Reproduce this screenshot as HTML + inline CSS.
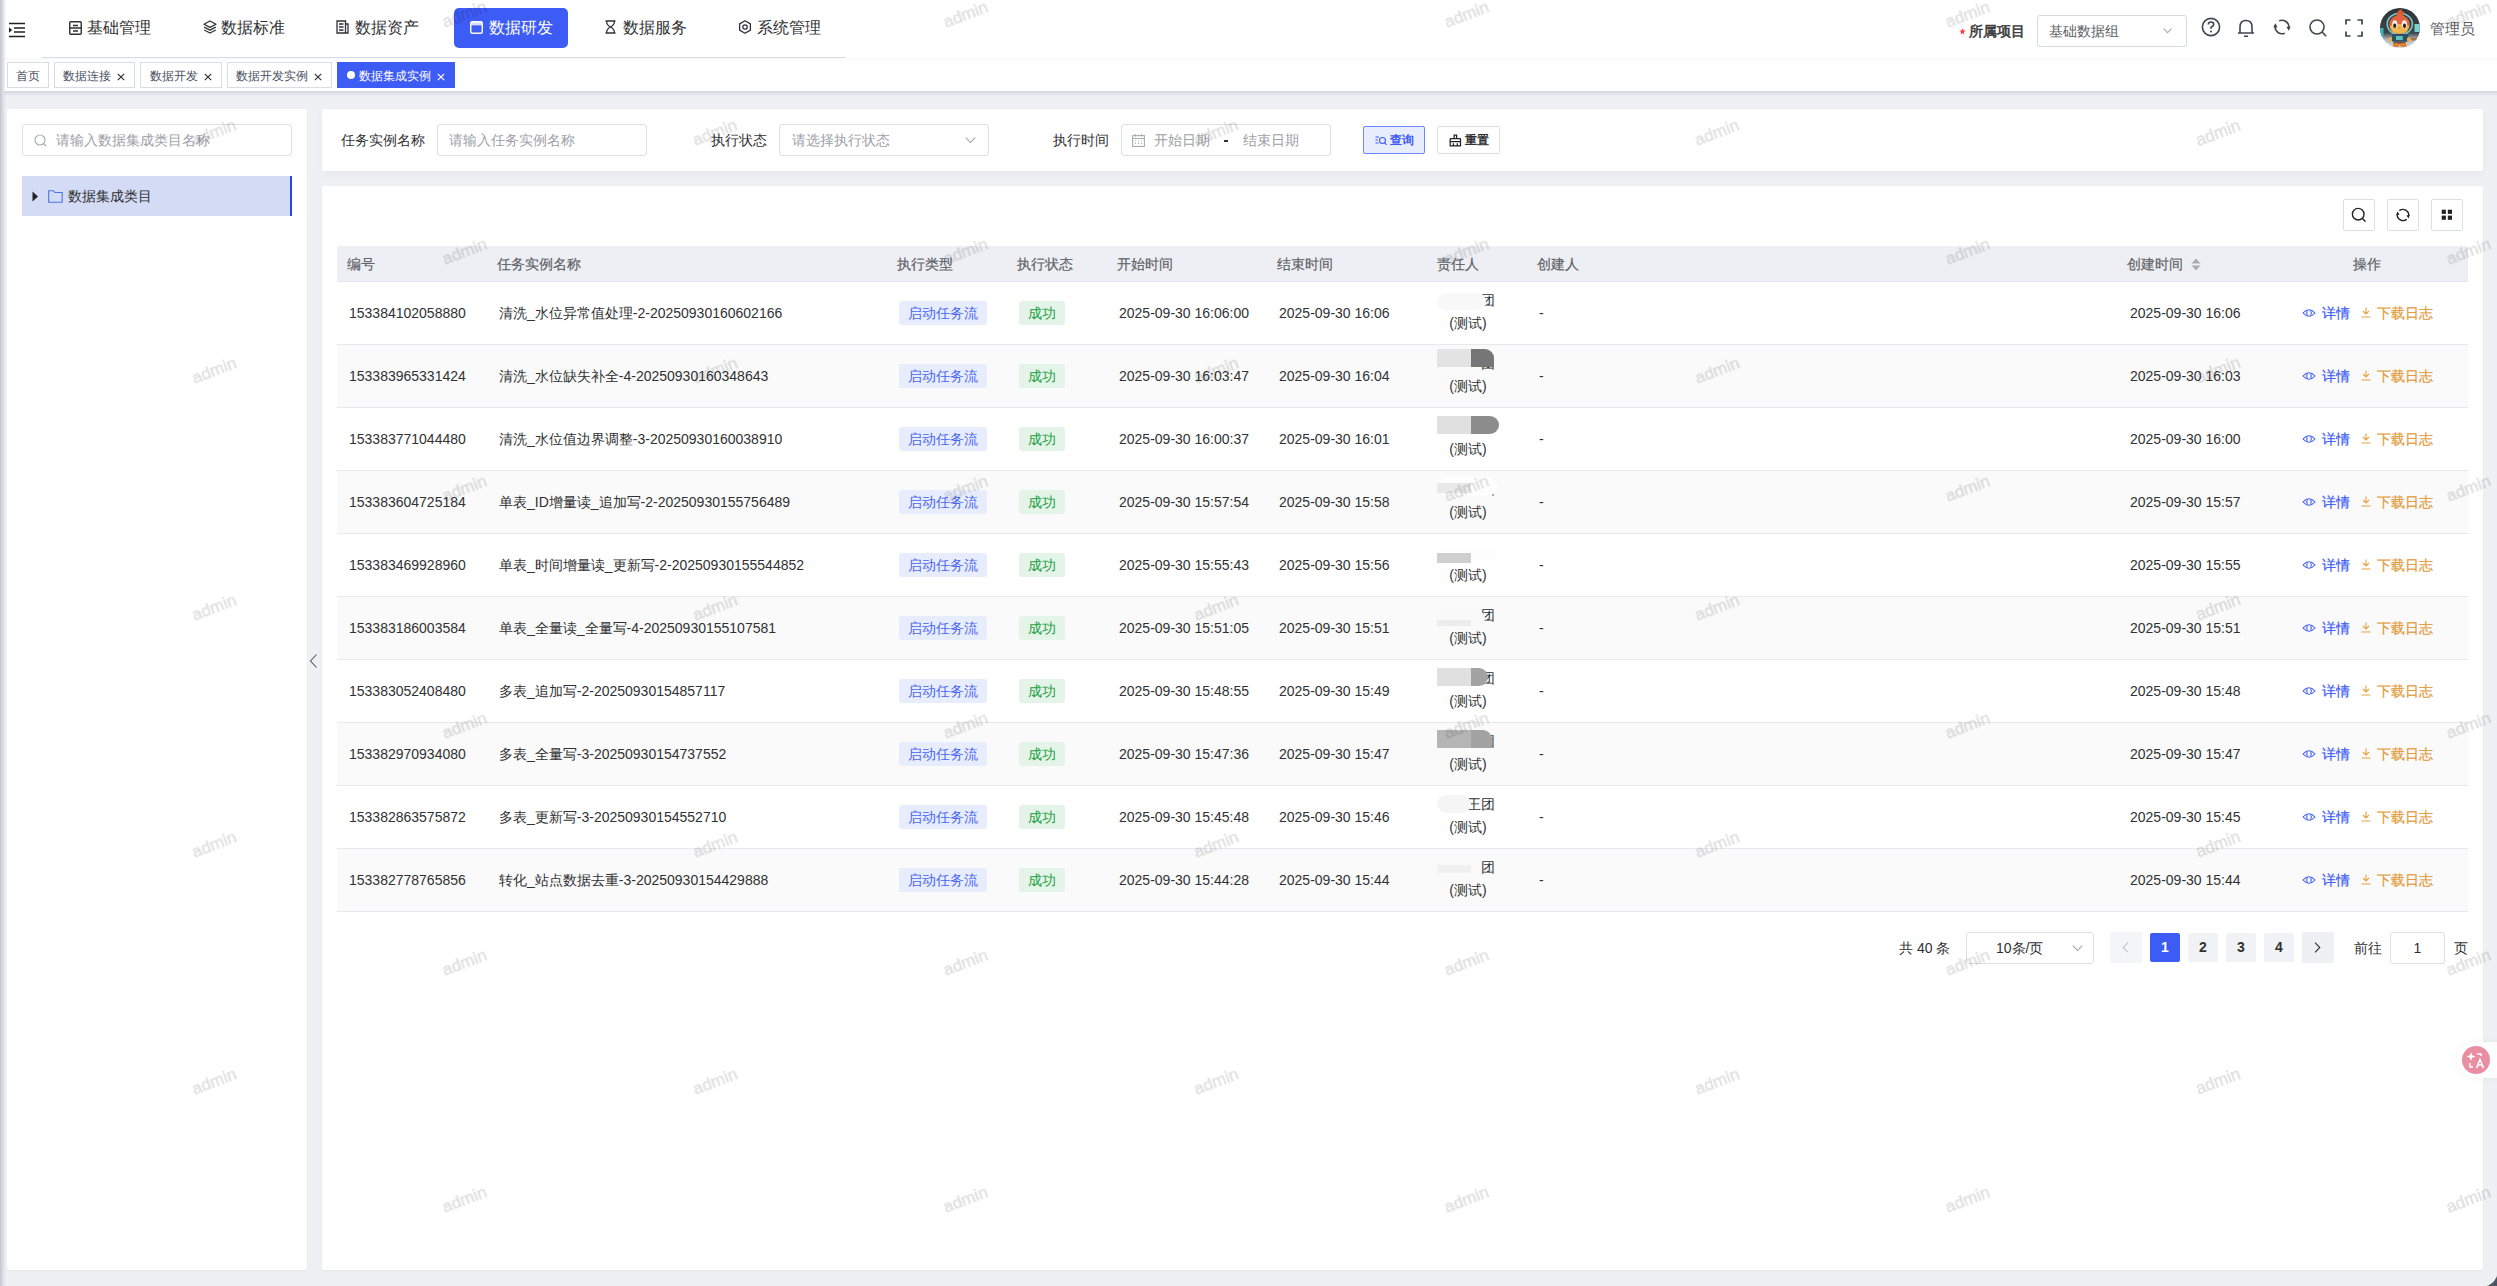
<!DOCTYPE html>
<html><head><meta charset="utf-8">
<style>
*{box-sizing:border-box;margin:0;padding:0}
html,body{width:2497px;height:1286px;overflow:hidden}
body{position:relative;background:#eef0f4;font-family:"Liberation Sans",sans-serif;color:#303133;font-size:14px}
.abs{position:absolute}
#hdr{position:absolute;left:0;top:0;width:2497px;height:58px;background:#fff}
#navline{position:absolute;left:42px;top:57px;width:804px;height:1px;background:#d8dbe4}
.nav{position:absolute;top:8px;height:40px;line-height:40px;font-size:16px;color:#303133;white-space:nowrap}
.nav svg{position:absolute;top:12px}
.nav span{position:absolute;top:0}
#navact{position:absolute;left:454px;top:8px;width:114px;height:40px;background:#3d5bf5;border-radius:5px}
#tabbar{position:absolute;left:0;top:58px;width:2497px;height:33px;background:#fff;box-shadow:inset 0 3px 3px -2px rgba(0,0,0,.04)}
#tabshadow{position:absolute;left:0;top:91px;width:2497px;height:5px;background:linear-gradient(#d3d6de,#eef0f4)}
.tab{position:absolute;top:62px;height:26px;border:1px solid #d8dce5;background:#fff;font-size:12px;line-height:26px;color:#495060;white-space:nowrap}
.tab i{position:absolute;top:10px;width:8px;height:8px;display:block}.tab i svg{display:block}
.panel{position:absolute;background:#fff;border-radius:2px}
.inp{position:absolute;height:32px;border:1px solid #dcdfe6;border-radius:3px;background:#fff;font-size:14px;line-height:30px;color:#9ea1a8;white-space:nowrap}
.lbl{position:absolute;font-size:14px;line-height:32px;color:#303133;white-space:nowrap}
.btn{position:absolute;height:28px;border:1px solid #dcdfe6;border-radius:2px;font-size:12px;line-height:26px;font-weight:bold;white-space:nowrap}
#thead{position:absolute;left:337px;top:246px;width:2131px;height:36px;background:#eeeff4;border-bottom:1px solid #e4e7ef}
.th{position:absolute;top:246px;line-height:36px;font-size:14px;font-weight:400;color:#606368;-webkit-text-stroke:.2px #606368;white-space:nowrap}
.tr{position:absolute;left:337px;width:2131px;height:63px;border-bottom:1px solid #e6e9f1}
.tr .td{position:absolute;top:0;line-height:62px;font-size:14px;color:#303133;white-space:nowrap;margin-left:-337px}
.tr .tag{position:absolute;top:19px;height:24px;line-height:24px;padding:0 9px;font-size:14px;border-radius:3px;margin-left:-337px;white-space:nowrap}
.tb{background:#e8edfd;color:#4866f4}
.tg{background:#e5f4e9;color:#23a043}
.resp{position:absolute;left:1100px;top:7px;width:62px;text-align:center;font-size:14px;line-height:23px;color:#303133}
.resp .r1{height:23px;text-align:right;width:58px}
.blob{position:absolute;margin-left:-337px}
.act{position:absolute;top:0;line-height:62px;margin-left:-337px;white-space:nowrap}
.act svg{position:relative;top:0px;margin-right:5px}
.act b{font-weight:normal;font-size:14px;-webkit-text-stroke:.2px currentColor;margin-left:1px}
.blue{color:#3d5bf5}
.orange{color:#e39b3b}
.tbtn{position:absolute;top:199px;width:32px;height:32px;border:1px solid #dcdfe6;border-radius:2px;background:#fff}
.tbtn svg{position:absolute;left:-1px;top:-1px}
.pg{position:absolute;top:933px;width:30px;height:29px;background:#f0f2f5;border-radius:2px;text-align:center;line-height:29px;font-size:14px;font-weight:bold;color:#303133}
#wm{position:absolute;left:0;top:0;width:2497px;height:1286px;pointer-events:none}
#wm text{font-family:"Liberation Sans",sans-serif;font-size:17px;fill:#000;stroke:#000;stroke-width:.6px;text-anchor:middle;dominant-baseline:central}
</style></head><body>
<div id="hdr"></div>
<div id="navline"></div>
<!-- hamburger -->
<svg class="abs" style="left:8px;top:21px" width="18" height="17" viewBox="0 0 18 17"><path d="M1 2.5H17M6 7H17M6 11H17M1 15.5H17" stroke="#222" stroke-width="1.6" fill="none"/><path d="M1 6.3L4.2 9L1 11.7Z" fill="#222"/></svg>
<!-- nav items -->
<div class="nav" style="left:68px"><svg width="13" height="14" viewBox="0 0 13 14" style="left:1px;top:13px"><rect x="0.75" y="0.75" width="11.5" height="12.5" rx="1" fill="none" stroke="#303133" stroke-width="1.4"/><path d="M4 4.5H9M0.8 7H12.2M4 10H9" stroke="#303133" stroke-width="1.4"/></svg><span style="left:19px">基础管理</span></div>
<div class="nav" style="left:202px"><svg width="14" height="14" viewBox="0 0 14 14" style="left:1px;top:12px"><path d="M7 1L13 4.2L7 7.4L1 4.2Z" fill="none" stroke="#303133" stroke-width="1.3" stroke-linejoin="round"/><path d="M1.2 7.2L7 10.2L12.8 7.2M1.2 10L7 13L12.8 10" fill="none" stroke="#303133" stroke-width="1.3" stroke-linejoin="round"/></svg><span style="left:19px">数据标准</span></div>
<div class="nav" style="left:336px"><svg width="13" height="14" viewBox="0 0 13 14" style="left:0px;top:12px"><path d="M1 1H9.5V13H1Z M9.5 4H12V13H9.5" fill="none" stroke="#303133" stroke-width="1.3"/><path d="M3 4H7.5M3 7H7.5M3 10H7.5" stroke="#303133" stroke-width="1.3"/></svg><span style="left:19px">数据资产</span></div>
<div id="navact"></div>
<div class="nav" style="left:470px;color:#fff"><svg width="13" height="13" viewBox="0 0 13 13" style="left:0px;top:13px"><rect x="0.75" y="0.75" width="11.5" height="11.5" rx="1.5" fill="none" stroke="#fff" stroke-width="1.4"/><rect x="0.75" y="0.75" width="11.5" height="3.6" fill="#fff" opacity=".8"/></svg><span style="left:19px">数据研发</span></div>
<div class="nav" style="left:604px"><svg width="13" height="14" viewBox="0 0 13 14" style="left:0px;top:12px"><path d="M1.5 1H11.5M1.5 13H11.5M2.5 1Q2.5 5 6.5 7Q10.5 9 10.5 13M10.5 1Q10.5 5 6.5 7Q2.5 9 2.5 13" fill="none" stroke="#303133" stroke-width="1.3"/></svg><span style="left:19px">数据服务</span></div>
<div class="nav" style="left:738px"><svg width="14" height="14" viewBox="0 0 14 14" style="left:0px;top:12px"><path d="M7 0.8L12.4 3.9V10.1L7 13.2L1.6 10.1V3.9Z" fill="none" stroke="#303133" stroke-width="1.3" stroke-linejoin="round"/><circle cx="7" cy="7" r="2.2" fill="none" stroke="#303133" stroke-width="1.3"/></svg><span style="left:19px">系统管理</span></div>
<!-- right header -->
<svg class="abs" style="left:1959px;top:28px" width="7" height="7" viewBox="0 0 7 7"><path d="M3.5 0.3L4.3 2.6L6.7 2.6L4.8 4.1L5.5 6.6L3.5 5.1L1.5 6.6L2.2 4.1L0.3 2.6L2.7 2.6Z" fill="#f33"/></svg><div class="abs" style="left:1969px;top:16px;line-height:30px;font-size:14px;color:#3a3a3a;-webkit-text-stroke:.55px #3a3a3a;white-space:nowrap">所属项目</div>
<div class="inp" style="left:2037px;top:15px;width:150px;height:32px;color:#606266;padding-left:11px;border-color:#d5d9e2">基础数据组<svg style="position:absolute;left:125px;top:12px" width="9" height="6" viewBox="0 0 9 6"><path d="M0.6 0.7L4.5 4.6L8.4 0.7" fill="none" stroke="#a8abb2" stroke-width="1.1"/></svg></div>
<svg class="abs" style="left:2201px;top:17px" width="20" height="20" viewBox="0 0 20 20"><circle cx="10" cy="10" r="8.6" fill="none" stroke="#3f4450" stroke-width="1.6"/><path d="M7.3 7.6Q7.3 5 10 5Q12.7 5 12.7 7.4Q12.7 9 10 10.2V11.8" fill="none" stroke="#3f4450" stroke-width="1.6"/><circle cx="10" cy="14.4" r="1" fill="#3f4450"/></svg>
<svg class="abs" style="left:2236px;top:18px" width="20" height="20" viewBox="0 0 20 20"><path d="M4 15V9Q4 2.5 10 2.5Q16 2.5 16 9V15M2 15H18M8 18.2H12" fill="none" stroke="#3f4450" stroke-width="1.6"/></svg>
<svg class="abs" style="left:2272px;top:17px" width="20" height="20" viewBox="0 0 20 20"><path d="M7.2 3.8A7 7 0 0 1 16.9 10.6M12.8 16.2A7 7 0 0 1 3.1 9.4" fill="none" stroke="#3f4450" stroke-width="1.6"/><path d="M1.3 10.3L3.3 6.2L5.6 10.2Z M18.7 9.7L16.7 13.8L14.4 9.8Z" fill="#3f4450"/></svg>
<svg class="abs" style="left:2308px;top:18px" width="20" height="20" viewBox="0 0 20 20"><circle cx="9" cy="9" r="7" fill="none" stroke="#3f4450" stroke-width="1.6"/><path d="M14 14L18.2 18.2" stroke="#3f4450" stroke-width="1.6"/></svg>
<svg class="abs" style="left:2344px;top:18px" width="20" height="20" viewBox="0 0 20 20"><path d="M2 6.5V2H6.5M13.5 2H18V6.5M18 13.5V18H13.5M6.5 18H2V13.5" fill="none" stroke="#3f4450" stroke-width="1.7"/></svg>
<!-- avatar -->
<svg class="abs" style="left:2380px;top:8px" width="40" height="40" viewBox="0 0 40 40"><defs><clipPath id="cp"><circle cx="20" cy="20" r="20"/></clipPath><linearGradient id="bgg" x1="0" y1="0" x2="0" y2="1"><stop offset="0" stop-color="#2b3338"/><stop offset=".62" stop-color="#3a464c"/><stop offset=".8" stop-color="#b9bec6"/><stop offset="1" stop-color="#d8dce2"/></linearGradient></defs><g clip-path="url(#cp)"><rect width="40" height="40" fill="url(#bgg)"/>
<rect x="34.5" y="16" width="6" height="8" fill="#7fd0d0"/><rect x="0" y="20" width="3.5" height="9" fill="#3fb5b5"/><rect x="31" y="30" width="6" height="2.5" fill="#a8714d"/>
<ellipse cx="19.8" cy="16" rx="12.6" ry="10.8" fill="none" stroke="#7cc7c0" stroke-width="1.6"/>
<path d="M16.5 8.5Q17 2 21 1.3Q21.8 4 24.3 4.5Q23 7 23.6 9Z" fill="#dd5a36"/>
<ellipse cx="19.5" cy="16.5" rx="10.3" ry="9.4" fill="#e0643f"/>
<path d="M10 18Q12 16.5 19.5 16Q27 16.5 29.2 18Q28.5 25.5 19.5 25.8Q10.5 25.5 10 18Z" fill="#efb84f"/>
<ellipse cx="14.8" cy="16.3" rx="2.6" ry="4" fill="#f3ece6"/><ellipse cx="24.4" cy="16.3" rx="2.6" ry="4" fill="#f3ece6"/>
<ellipse cx="14.7" cy="17.8" rx="1.5" ry="2.3" fill="#2a1a14"/><ellipse cx="24.5" cy="17.8" rx="1.5" ry="2.3" fill="#2a1a14"/>
<path d="M18.6 19.5L20.4 19.5L19.5 21Z" fill="#e86a2f"/>
<rect x="12" y="26" width="16.4" height="7.8" rx="1.5" fill="#2f4e68"/><rect x="16" y="28" width="6.8" height="4" fill="#5cc2c0"/>
<ellipse cx="10.3" cy="31.5" rx="1.8" ry="2.6" fill="#e6b13f"/><ellipse cx="28.6" cy="31.5" rx="1.8" ry="2.6" fill="#e6b13f"/>
<rect x="13.5" y="33.8" width="12" height="2" fill="#6b4a3a"/><ellipse cx="16.2" cy="37" rx="3.5" ry="2" fill="#e0812f"/><ellipse cx="23.3" cy="37" rx="3.5" ry="2" fill="#e0812f"/>
</g></svg>
<div class="abs" style="left:2430px;top:15px;line-height:28px;font-size:15px;color:#5a5e66">管理员</div>

<!-- tab bar -->
<div id="tabbar"></div>
<div id="tabshadow"></div>
<div class="tab" style="left:7px;width:42px;text-align:center">首页</div>
<div class="tab" style="left:54px;width:81px;padding-left:8px">数据连接<i style="left:62px"><svg width="8" height="8" viewBox="0 0 8 8"><path d="M0.8 0.8L7.2 7.2M7.2 0.8L0.8 7.2" stroke="#333" stroke-width="1.2"/></svg></i></div>
<div class="tab" style="left:140px;width:82px;padding-left:9px">数据开发<i style="left:63px"><svg width="8" height="8" viewBox="0 0 8 8"><path d="M0.8 0.8L7.2 7.2M7.2 0.8L0.8 7.2" stroke="#333" stroke-width="1.2"/></svg></i></div>
<div class="tab" style="left:227px;width:105px;padding-left:8px">数据开发实例<i style="left:86px"><svg width="8" height="8" viewBox="0 0 8 8"><path d="M0.8 0.8L7.2 7.2M7.2 0.8L0.8 7.2" stroke="#333" stroke-width="1.2"/></svg></i></div>
<div class="tab" style="left:337px;width:118px;padding-left:21px;background:#3d5bf5;border-color:#3d5bf5;color:#fff"><span style="position:absolute;left:9px;top:8px;width:8px;height:8px;border-radius:50%;background:#fff"></span>数据集成实例<i style="left:99px"><svg width="8" height="8" viewBox="0 0 8 8"><path d="M0.8 0.8L7.2 7.2M7.2 0.8L0.8 7.2" stroke="#fff" stroke-width="1.2"/></svg></i></div>

<!-- left panel -->
<div class="panel" style="left:7px;top:109px;width:300px;height:1161px;box-shadow:0 1px 2px rgba(0,0,0,.05)"></div>
<div class="inp" style="left:22px;top:124px;width:270px;padding-left:33px">请输入数据集成类目名称<svg style="position:absolute;left:11px;top:9px" width="13" height="13" viewBox="0 0 13 13"><circle cx="6" cy="6" r="5" fill="none" stroke="#a8abb2" stroke-width="1.2"/><path d="M9.6 9.6L12 12" stroke="#a8abb2" stroke-width="1.2"/></svg></div>
<div class="abs" style="left:22px;top:176px;width:270px;height:40px;background:#d4dbf4;border-right:2px solid #2846f2"></div>
<svg class="abs" style="left:32px;top:191px" width="7" height="11" viewBox="0 0 7 11"><path d="M0.5 0.5L6 5.5L0.5 10.5Z" fill="#222"/></svg>
<svg class="abs" style="left:48px;top:190px" width="15" height="13" viewBox="0 0 15 13"><path d="M0.7 0.7H5.5L7 2.5H14.2V12.2H0.7Z" fill="none" stroke="#4a74e8" stroke-width="1.1"/></svg>
<div class="abs" style="left:68px;top:176px;line-height:40px;font-size:14px;color:#303133">数据集成类目</div>
<!-- collapse handle -->
<svg class="abs" style="left:309px;top:653px" width="10" height="16" viewBox="0 0 10 16"><path d="M7.5 1.5L1.5 8L7.5 14.5" fill="none" stroke="#555" stroke-width="1.1"/></svg>

<!-- search panel -->
<div class="panel" style="left:322px;top:109px;width:2161px;height:62px;box-shadow:0 3px 8px rgba(0,0,0,.04)"></div>
<div class="lbl" style="left:341px;top:124px">任务实例名称</div>
<div class="inp" style="left:437px;top:124px;width:210px;padding-left:11px">请输入任务实例名称</div>
<div class="lbl" style="left:711px;top:124px">执行状态</div>
<div class="inp" style="left:779px;top:124px;width:210px;padding-left:12px">请选择执行状态<svg style="position:absolute;left:185px;top:12px" width="11" height="7" viewBox="0 0 11 7"><path d="M0.7 0.7L5.5 5.5L10.3 0.7" fill="none" stroke="#a8abb2" stroke-width="1.1"/></svg></div>
<div class="lbl" style="left:1053px;top:124px">执行时间</div>
<div class="inp" style="left:1121px;top:124px;width:210px">
 <svg style="position:absolute;left:10px;top:9px" width="13" height="13" viewBox="0 0 13 13"><rect x="0.6" y="1.6" width="11.8" height="10.8" fill="none" stroke="#a8abb2" stroke-width="1.1"/><path d="M0.6 4.5H12.4M3.5 0V2.5M9.5 0V2.5" stroke="#a8abb2" stroke-width="1.1"/><path d="M3 7H4M6 7H7M9 7H10M3 9.5H4M6 9.5H7M9 9.5H10" stroke="#a8abb2" stroke-width="1"/></svg>
 <span style="position:absolute;left:32px">开始日期</span><span style="position:absolute;left:102px;top:15px;width:4px;height:2px;background:#303133"></span><span style="position:absolute;left:121px">结束日期</span></div>
<div class="btn" style="left:1363px;top:126px;width:62px;background:#e8edfd;border-color:#6d87f7;color:#3d5bf5;padding-left:26px">查询<svg style="position:absolute;left:11px;top:8px" width="12" height="11" viewBox="0 0 12 11"><path d="M0.5 2H4M0.5 5H3M0.5 8H3.5" stroke="#3d5bf5" stroke-width="1"/><circle cx="7.5" cy="5.5" r="3" fill="none" stroke="#3d5bf5" stroke-width="1.1"/><path d="M9.6 7.8L11.5 9.8" stroke="#3d5bf5" stroke-width="1.1"/></svg></div>
<div class="btn" style="left:1437px;top:126px;width:63px;background:#fff;color:#303133;padding-left:27px">重置<svg style="position:absolute;left:11px;top:7px" width="13" height="13" viewBox="0 0 13 13"><path d="M5.2 4.5V1.2H7.6V4.5 M1.2 7.6V5Q1.2 4.5 1.7 4.5H11Q11.5 4.5 11.5 5V7.6H1.2V11.8H11.5V7.6 M4.4 11.8V9.2 M8.3 11.8V9.2" fill="none" stroke="#222" stroke-width="1.25"/></svg></div>

<!-- table panel -->
<div class="panel" style="left:322px;top:186px;width:2161px;height:1084px;box-shadow:0 1px 2px rgba(0,0,0,.05)"></div>
<div class="tbtn" style="left:2343px"><svg width="32" height="32" viewBox="0 0 32 32"><circle cx="15.2" cy="15.2" r="5.8" fill="none" stroke="#222" stroke-width="1.4"/><path d="M19.4 19.4L22.5 22.5" stroke="#222" stroke-width="1.4"/></svg></div>
<div class="tbtn" style="left:2387px"><svg width="32" height="32" viewBox="0 0 32 32"><path d="M12.3 11.6A6 6 0 0 1 21.8 16.8M19.7 20.4A6 6 0 0 1 10.2 15.2" fill="none" stroke="#222" stroke-width="1.4"/><path d="M9.2 16.3L10.4 12.6L12.6 15.6Z M22.8 15.7L21.6 19.4L19.4 16.4Z" fill="#222"/></svg></div>
<div class="tbtn" style="left:2431px"><svg width="32" height="32" viewBox="0 0 32 32"><rect x="10.7" y="10.7" width="4.2" height="4.2" fill="#222"/><rect x="16.8" y="10.7" width="4.2" height="4.2" fill="#222"/><rect x="10.7" y="16.6" width="4.2" height="4.2" fill="#222"/><rect x="16.8" y="16.6" width="4.2" height="4.2" fill="#222"/></svg></div>

<div id="thead"></div>
<div class="th" style="left:347px">编号</div>
<div class="th" style="left:497px">任务实例名称</div>
<div class="th" style="left:897px">执行类型</div>
<div class="th" style="left:1017px">执行状态</div>
<div class="th" style="left:1117px">开始时间</div>
<div class="th" style="left:1277px">结束时间</div>
<div class="th" style="left:1437px">责任人</div>
<div class="th" style="left:1537px">创建人</div>
<div class="th" style="left:2127px">创建时间<svg style="position:absolute;left:64px;top:12px" width="10" height="13" viewBox="0 0 10 13"><path d="M5 0.5L9.5 5.5H0.5Z M5 12.5L9.5 7.5H0.5Z" fill="#a8abb2"/></svg></div>
<div class="th" style="left:2353px">操作</div>

<div class="tr" style="top:282px;background:#ffffff">
<span class="td" style="left:349px">153384102058880</span>
<span class="td" style="left:499px">清洗_水位异常值处理-2-20250930160602166</span>
<span class="tag tb" style="left:899px">启动任务流</span>
<span class="tag tg" style="left:1019px">成功</span>
<span class="td" style="left:1119px">2025-09-30 16:06:00</span>
<span class="td" style="left:1279px">2025-09-30 16:06</span>
<div class="resp"><div class="r1">团</div><div class="r2">(测试)</div></div><div class="blob" style="left:1437px;width:49px;top:11px;height:17px;background:#f8f8f8;border-radius:9px"></div>
<span class="td" style="left:1539px">-</span>
<span class="td" style="left:2130px">2025-09-30 16:06</span>
<span class="act" style="left:2302px"><svg width="14" height="10" viewBox="0 0 14 10"><path d="M1 5 Q7 -1.5 13 5 Q7 11.5 1 5Z" fill="none" stroke="#3d5bf5" stroke-width="1.1"/><path d="M5.3 3 Q4 5 5.3 7 M8.7 3 Q10 5 8.7 7" fill="none" stroke="#3d5bf5" stroke-width="1.1"/></svg><b class="blue">详情</b></span>
<span class="act" style="left:2361px"><svg width="10" height="11" viewBox="0 0 10 11"><path d="M5 0.5 V6.5 M2 4 L5 7 L8 4 M0.5 10 H9.5" fill="none" stroke="#e6a23c" stroke-width="1.1"/></svg><b class="orange">下载日志</b></span>
</div>
<div class="tr" style="top:345px;background:#fafafa">
<span class="td" style="left:349px">153383965331424</span>
<span class="td" style="left:499px">清洗_水位缺失补全-4-20250930160348643</span>
<span class="tag tb" style="left:899px">启动任务流</span>
<span class="tag tg" style="left:1019px">成功</span>
<span class="td" style="left:1119px">2025-09-30 16:03:47</span>
<span class="td" style="left:1279px">2025-09-30 16:04</span>
<div class="resp"><div class="r1">团</div><div class="r2">(测试)</div></div><div class="blob" style="left:1437px;width:34px;top:4px;height:18px;background:#e3e3e3;border-radius:0"></div><div class="blob" style="left:1471px;width:23px;top:4px;height:18px;background:#767676;border-radius:0 9px 0 0"></div>
<span class="td" style="left:1539px">-</span>
<span class="td" style="left:2130px">2025-09-30 16:03</span>
<span class="act" style="left:2302px"><svg width="14" height="10" viewBox="0 0 14 10"><path d="M1 5 Q7 -1.5 13 5 Q7 11.5 1 5Z" fill="none" stroke="#3d5bf5" stroke-width="1.1"/><path d="M5.3 3 Q4 5 5.3 7 M8.7 3 Q10 5 8.7 7" fill="none" stroke="#3d5bf5" stroke-width="1.1"/></svg><b class="blue">详情</b></span>
<span class="act" style="left:2361px"><svg width="10" height="11" viewBox="0 0 10 11"><path d="M5 0.5 V6.5 M2 4 L5 7 L8 4 M0.5 10 H9.5" fill="none" stroke="#e6a23c" stroke-width="1.1"/></svg><b class="orange">下载日志</b></span>
</div>
<div class="tr" style="top:408px;background:#ffffff">
<span class="td" style="left:349px">153383771044480</span>
<span class="td" style="left:499px">清洗_水位值边界调整-3-20250930160038910</span>
<span class="tag tb" style="left:899px">启动任务流</span>
<span class="tag tg" style="left:1019px">成功</span>
<span class="td" style="left:1119px">2025-09-30 16:00:37</span>
<span class="td" style="left:1279px">2025-09-30 16:01</span>
<div class="resp"><div class="r1"></div><div class="r2">(测试)</div></div><div class="blob" style="left:1437px;width:34px;top:8px;height:18px;background:#e0e0e0;border-radius:0"></div><div class="blob" style="left:1471px;width:28px;top:8px;height:18px;background:#8c8c8c;border-radius:0 9px 9px 0"></div>
<span class="td" style="left:1539px">-</span>
<span class="td" style="left:2130px">2025-09-30 16:00</span>
<span class="act" style="left:2302px"><svg width="14" height="10" viewBox="0 0 14 10"><path d="M1 5 Q7 -1.5 13 5 Q7 11.5 1 5Z" fill="none" stroke="#3d5bf5" stroke-width="1.1"/><path d="M5.3 3 Q4 5 5.3 7 M8.7 3 Q10 5 8.7 7" fill="none" stroke="#3d5bf5" stroke-width="1.1"/></svg><b class="blue">详情</b></span>
<span class="act" style="left:2361px"><svg width="10" height="11" viewBox="0 0 10 11"><path d="M5 0.5 V6.5 M2 4 L5 7 L8 4 M0.5 10 H9.5" fill="none" stroke="#e6a23c" stroke-width="1.1"/></svg><b class="orange">下载日志</b></span>
</div>
<div class="tr" style="top:471px;background:#fafafa">
<span class="td" style="left:349px">153383604725184</span>
<span class="td" style="left:499px">单表_ID增量读_追加写-2-20250930155756489</span>
<span class="tag tb" style="left:899px">启动任务流</span>
<span class="tag tg" style="left:1019px">成功</span>
<span class="td" style="left:1119px">2025-09-30 15:57:54</span>
<span class="td" style="left:1279px">2025-09-30 15:58</span>
<div class="resp"><div class="r1">集团</div><div class="r2">(测试)</div></div><div class="blob" style="left:1437px;width:60px;top:6px;height:19px;background:#fefefe;border-radius:9px"></div><div class="blob" style="left:1437px;width:34px;top:12px;height:10px;background:#e9e9e9;border-radius:0"></div>
<span class="td" style="left:1539px">-</span>
<span class="td" style="left:2130px">2025-09-30 15:57</span>
<span class="act" style="left:2302px"><svg width="14" height="10" viewBox="0 0 14 10"><path d="M1 5 Q7 -1.5 13 5 Q7 11.5 1 5Z" fill="none" stroke="#3d5bf5" stroke-width="1.1"/><path d="M5.3 3 Q4 5 5.3 7 M8.7 3 Q10 5 8.7 7" fill="none" stroke="#3d5bf5" stroke-width="1.1"/></svg><b class="blue">详情</b></span>
<span class="act" style="left:2361px"><svg width="10" height="11" viewBox="0 0 10 11"><path d="M5 0.5 V6.5 M2 4 L5 7 L8 4 M0.5 10 H9.5" fill="none" stroke="#e6a23c" stroke-width="1.1"/></svg><b class="orange">下载日志</b></span>
</div>
<div class="tr" style="top:534px;background:#ffffff">
<span class="td" style="left:349px">153383469928960</span>
<span class="td" style="left:499px">单表_时间增量读_更新写-2-20250930155544852</span>
<span class="tag tb" style="left:899px">启动任务流</span>
<span class="tag tg" style="left:1019px">成功</span>
<span class="td" style="left:1119px">2025-09-30 15:55:43</span>
<span class="td" style="left:1279px">2025-09-30 15:56</span>
<div class="resp"><div class="r1"></div><div class="r2">(测试)</div></div><div class="blob" style="left:1437px;width:60px;top:14px;height:12px;background:#fdfdfd;border-radius:9px"></div><div class="blob" style="left:1437px;width:34px;top:19px;height:10px;background:#cfcfcf;border-radius:0"></div>
<span class="td" style="left:1539px">-</span>
<span class="td" style="left:2130px">2025-09-30 15:55</span>
<span class="act" style="left:2302px"><svg width="14" height="10" viewBox="0 0 14 10"><path d="M1 5 Q7 -1.5 13 5 Q7 11.5 1 5Z" fill="none" stroke="#3d5bf5" stroke-width="1.1"/><path d="M5.3 3 Q4 5 5.3 7 M8.7 3 Q10 5 8.7 7" fill="none" stroke="#3d5bf5" stroke-width="1.1"/></svg><b class="blue">详情</b></span>
<span class="act" style="left:2361px"><svg width="10" height="11" viewBox="0 0 10 11"><path d="M5 0.5 V6.5 M2 4 L5 7 L8 4 M0.5 10 H9.5" fill="none" stroke="#e6a23c" stroke-width="1.1"/></svg><b class="orange">下载日志</b></span>
</div>
<div class="tr" style="top:597px;background:#fafafa">
<span class="td" style="left:349px">153383186003584</span>
<span class="td" style="left:499px">单表_全量读_全量写-4-20250930155107581</span>
<span class="tag tb" style="left:899px">启动任务流</span>
<span class="tag tg" style="left:1019px">成功</span>
<span class="td" style="left:1119px">2025-09-30 15:51:05</span>
<span class="td" style="left:1279px">2025-09-30 15:51</span>
<div class="resp"><div class="r1">团</div><div class="r2">(测试)</div></div><div class="blob" style="left:1437px;width:48px;top:14px;height:15px;background:#f9f9f9;border-radius:9px"></div><div class="blob" style="left:1437px;width:34px;top:23px;height:6px;background:#ececec;border-radius:0"></div>
<span class="td" style="left:1539px">-</span>
<span class="td" style="left:2130px">2025-09-30 15:51</span>
<span class="act" style="left:2302px"><svg width="14" height="10" viewBox="0 0 14 10"><path d="M1 5 Q7 -1.5 13 5 Q7 11.5 1 5Z" fill="none" stroke="#3d5bf5" stroke-width="1.1"/><path d="M5.3 3 Q4 5 5.3 7 M8.7 3 Q10 5 8.7 7" fill="none" stroke="#3d5bf5" stroke-width="1.1"/></svg><b class="blue">详情</b></span>
<span class="act" style="left:2361px"><svg width="10" height="11" viewBox="0 0 10 11"><path d="M5 0.5 V6.5 M2 4 L5 7 L8 4 M0.5 10 H9.5" fill="none" stroke="#e6a23c" stroke-width="1.1"/></svg><b class="orange">下载日志</b></span>
</div>
<div class="tr" style="top:660px;background:#ffffff">
<span class="td" style="left:349px">153383052408480</span>
<span class="td" style="left:499px">多表_追加写-2-20250930154857117</span>
<span class="tag tb" style="left:899px">启动任务流</span>
<span class="tag tg" style="left:1019px">成功</span>
<span class="td" style="left:1119px">2025-09-30 15:48:55</span>
<span class="td" style="left:1279px">2025-09-30 15:49</span>
<div class="resp"><div class="r1">团</div><div class="r2">(测试)</div></div><div class="blob" style="left:1437px;width:34px;top:8px;height:18px;background:#e0e0e0;border-radius:0"></div><div class="blob" style="left:1471px;width:17px;top:8px;height:18px;background:#a3a3a3;border-radius:0 9px 9px 0"></div>
<span class="td" style="left:1539px">-</span>
<span class="td" style="left:2130px">2025-09-30 15:48</span>
<span class="act" style="left:2302px"><svg width="14" height="10" viewBox="0 0 14 10"><path d="M1 5 Q7 -1.5 13 5 Q7 11.5 1 5Z" fill="none" stroke="#3d5bf5" stroke-width="1.1"/><path d="M5.3 3 Q4 5 5.3 7 M8.7 3 Q10 5 8.7 7" fill="none" stroke="#3d5bf5" stroke-width="1.1"/></svg><b class="blue">详情</b></span>
<span class="act" style="left:2361px"><svg width="10" height="11" viewBox="0 0 10 11"><path d="M5 0.5 V6.5 M2 4 L5 7 L8 4 M0.5 10 H9.5" fill="none" stroke="#e6a23c" stroke-width="1.1"/></svg><b class="orange">下载日志</b></span>
</div>
<div class="tr" style="top:723px;background:#fafafa">
<span class="td" style="left:349px">153382970934080</span>
<span class="td" style="left:499px">多表_全量写-3-20250930154737552</span>
<span class="tag tb" style="left:899px">启动任务流</span>
<span class="tag tg" style="left:1019px">成功</span>
<span class="td" style="left:1119px">2025-09-30 15:47:36</span>
<span class="td" style="left:1279px">2025-09-30 15:47</span>
<div class="resp"><div class="r1">团</div><div class="r2">(测试)</div></div><div class="blob" style="left:1437px;width:34px;top:7px;height:18px;background:#b5b5b5;border-radius:0"></div><div class="blob" style="left:1471px;width:21px;top:7px;height:18px;background:#a3a3a3;border-radius:0 9px 0 0"></div>
<span class="td" style="left:1539px">-</span>
<span class="td" style="left:2130px">2025-09-30 15:47</span>
<span class="act" style="left:2302px"><svg width="14" height="10" viewBox="0 0 14 10"><path d="M1 5 Q7 -1.5 13 5 Q7 11.5 1 5Z" fill="none" stroke="#3d5bf5" stroke-width="1.1"/><path d="M5.3 3 Q4 5 5.3 7 M8.7 3 Q10 5 8.7 7" fill="none" stroke="#3d5bf5" stroke-width="1.1"/></svg><b class="blue">详情</b></span>
<span class="act" style="left:2361px"><svg width="10" height="11" viewBox="0 0 10 11"><path d="M5 0.5 V6.5 M2 4 L5 7 L8 4 M0.5 10 H9.5" fill="none" stroke="#e6a23c" stroke-width="1.1"/></svg><b class="orange">下载日志</b></span>
</div>
<div class="tr" style="top:786px;background:#ffffff">
<span class="td" style="left:349px">153382863575872</span>
<span class="td" style="left:499px">多表_更新写-3-20250930154552710</span>
<span class="tag tb" style="left:899px">启动任务流</span>
<span class="tag tg" style="left:1019px">成功</span>
<span class="td" style="left:1119px">2025-09-30 15:45:48</span>
<span class="td" style="left:1279px">2025-09-30 15:46</span>
<div class="resp"><div class="r1">王团</div><div class="r2">(测试)</div></div><div class="blob" style="left:1437px;width:34px;top:9px;height:18px;background:#f5f5f5;border-radius:9px"></div>
<span class="td" style="left:1539px">-</span>
<span class="td" style="left:2130px">2025-09-30 15:45</span>
<span class="act" style="left:2302px"><svg width="14" height="10" viewBox="0 0 14 10"><path d="M1 5 Q7 -1.5 13 5 Q7 11.5 1 5Z" fill="none" stroke="#3d5bf5" stroke-width="1.1"/><path d="M5.3 3 Q4 5 5.3 7 M8.7 3 Q10 5 8.7 7" fill="none" stroke="#3d5bf5" stroke-width="1.1"/></svg><b class="blue">详情</b></span>
<span class="act" style="left:2361px"><svg width="10" height="11" viewBox="0 0 10 11"><path d="M5 0.5 V6.5 M2 4 L5 7 L8 4 M0.5 10 H9.5" fill="none" stroke="#e6a23c" stroke-width="1.1"/></svg><b class="orange">下载日志</b></span>
</div>
<div class="tr" style="top:849px;background:#fafafa">
<span class="td" style="left:349px">153382778765856</span>
<span class="td" style="left:499px">转化_站点数据去重-3-20250930154429888</span>
<span class="tag tb" style="left:899px">启动任务流</span>
<span class="tag tg" style="left:1019px">成功</span>
<span class="td" style="left:1119px">2025-09-30 15:44:28</span>
<span class="td" style="left:1279px">2025-09-30 15:44</span>
<div class="resp"><div class="r1">团</div><div class="r2">(测试)</div></div><div class="blob" style="left:1437px;width:34px;top:16px;height:8px;background:#f0f0f0;border-radius:0"></div>
<span class="td" style="left:1539px">-</span>
<span class="td" style="left:2130px">2025-09-30 15:44</span>
<span class="act" style="left:2302px"><svg width="14" height="10" viewBox="0 0 14 10"><path d="M1 5 Q7 -1.5 13 5 Q7 11.5 1 5Z" fill="none" stroke="#3d5bf5" stroke-width="1.1"/><path d="M5.3 3 Q4 5 5.3 7 M8.7 3 Q10 5 8.7 7" fill="none" stroke="#3d5bf5" stroke-width="1.1"/></svg><b class="blue">详情</b></span>
<span class="act" style="left:2361px"><svg width="10" height="11" viewBox="0 0 10 11"><path d="M5 0.5 V6.5 M2 4 L5 7 L8 4 M0.5 10 H9.5" fill="none" stroke="#e6a23c" stroke-width="1.1"/></svg><b class="orange">下载日志</b></span>
</div>

<!-- pagination -->
<div class="abs" style="left:1899px;top:933px;line-height:30px;font-size:14px;color:#303133;white-space:nowrap">共 40 条</div>
<div class="inp" style="left:1966px;top:932px;width:128px;color:#303133;padding-left:29px">10条/页<svg style="position:absolute;left:105px;top:12px" width="11" height="7" viewBox="0 0 11 7"><path d="M0.7 0.7L5.5 5.5L10.3 0.7" fill="none" stroke="#a8abb2" stroke-width="1.1"/></svg></div>
<div class="pg" style="left:2110px;top:932px;width:32px;height:31px;background:#f4f5f9"><svg style="position:absolute;left:12px;top:10px" width="7" height="11" viewBox="0 0 7 11"><path d="M6 0.7L1.2 5.5L6 10.3" fill="none" stroke="#c0c4cc" stroke-width="1.1"/></svg></div>
<div class="pg" style="left:2150px;background:#3d5bf5;color:#fff">1</div>
<div class="pg" style="left:2188px">2</div>
<div class="pg" style="left:2226px">3</div>
<div class="pg" style="left:2264px">4</div>
<div class="pg" style="left:2302px;top:932px;width:32px;height:31px;background:#eef0f4"><svg style="position:absolute;left:12px;top:10px" width="7" height="11" viewBox="0 0 7 11"><path d="M1 0.7L5.8 5.5L1 10.3" fill="none" stroke="#303133" stroke-width="1.1"/></svg></div>
<div class="abs" style="left:2354px;top:933px;line-height:30px;font-size:14px;color:#303133">前往</div>
<div class="inp" style="left:2390px;top:932px;width:55px;color:#303133;text-align:center">1</div>
<div class="abs" style="left:2454px;top:933px;line-height:30px;font-size:14px;color:#303133">页</div>

<!-- translate widget -->
<div class="abs" style="left:2457px;top:1042px;width:60px;height:36px;border-radius:18px;background:#fff;box-shadow:0 0 6px rgba(0,0,0,.06)"></div>
<svg class="abs" style="left:2462px;top:1046px" width="28" height="28" viewBox="0 0 28 28"><circle cx="14" cy="14" r="14" fill="#e98ea3"/><path d="M9 6L10.2 9.3L13.5 10.5L10.2 11.7L9 15L7.8 11.7L4.5 10.5L7.8 9.3Z" fill="#fff"/><path d="M15 8H19V10M8 17V21H11" fill="none" stroke="#fff" stroke-width="1.5"/><path d="M14.5 22L18 13.5L21.5 22M15.8 19H20.2" fill="none" stroke="#fff" stroke-width="1.6"/></svg>

<!-- left edge shade -->
<div class="abs" style="left:0;top:0;width:6px;height:1286px;background:linear-gradient(90deg,#c2c5cb,#d9dce2 45%,rgba(238,240,244,0))"></div>
<!-- window corner -->
<svg class="abs" style="left:2467px;top:1256px" width="30" height="30" viewBox="0 0 30 30"><path d="M30 16A14 14 0 0 1 16 30H30Z" fill="#4d5563"/><path d="M30 16A14 14 0 0 1 16 30" fill="none" stroke="#f4f5f8" stroke-width="1"/></svg>

<svg id="wm" width="2497" height="1286"><g opacity=".12">
<text x="-36.4" y="14.4" transform="rotate(-21 -36.4 14.4)">admin</text>
<text x="464.6" y="14.4" transform="rotate(-21 464.6 14.4)">admin</text>
<text x="965.6" y="14.4" transform="rotate(-21 965.6 14.4)">admin</text>
<text x="1466.6" y="14.4" transform="rotate(-21 1466.6 14.4)">admin</text>
<text x="1967.6" y="14.4" transform="rotate(-21 1967.6 14.4)">admin</text>
<text x="2468.6" y="14.4" transform="rotate(-21 2468.6 14.4)">admin</text>
<text x="214.1" y="132.9" transform="rotate(-21 214.1 132.9)">admin</text>
<text x="715.1" y="132.9" transform="rotate(-21 715.1 132.9)">admin</text>
<text x="1216.1" y="132.9" transform="rotate(-21 1216.1 132.9)">admin</text>
<text x="1717.1" y="132.9" transform="rotate(-21 1717.1 132.9)">admin</text>
<text x="2218.1" y="132.9" transform="rotate(-21 2218.1 132.9)">admin</text>
<text x="-36.4" y="251.5" transform="rotate(-21 -36.4 251.5)">admin</text>
<text x="464.6" y="251.5" transform="rotate(-21 464.6 251.5)">admin</text>
<text x="965.6" y="251.5" transform="rotate(-21 965.6 251.5)">admin</text>
<text x="1466.6" y="251.5" transform="rotate(-21 1466.6 251.5)">admin</text>
<text x="1967.6" y="251.5" transform="rotate(-21 1967.6 251.5)">admin</text>
<text x="2468.6" y="251.5" transform="rotate(-21 2468.6 251.5)">admin</text>
<text x="214.1" y="370.0" transform="rotate(-21 214.1 370.0)">admin</text>
<text x="715.1" y="370.0" transform="rotate(-21 715.1 370.0)">admin</text>
<text x="1216.1" y="370.0" transform="rotate(-21 1216.1 370.0)">admin</text>
<text x="1717.1" y="370.0" transform="rotate(-21 1717.1 370.0)">admin</text>
<text x="2218.1" y="370.0" transform="rotate(-21 2218.1 370.0)">admin</text>
<text x="-36.4" y="488.5" transform="rotate(-21 -36.4 488.5)">admin</text>
<text x="464.6" y="488.5" transform="rotate(-21 464.6 488.5)">admin</text>
<text x="965.6" y="488.5" transform="rotate(-21 965.6 488.5)">admin</text>
<text x="1466.6" y="488.5" transform="rotate(-21 1466.6 488.5)">admin</text>
<text x="1967.6" y="488.5" transform="rotate(-21 1967.6 488.5)">admin</text>
<text x="2468.6" y="488.5" transform="rotate(-21 2468.6 488.5)">admin</text>
<text x="214.1" y="607.1" transform="rotate(-21 214.1 607.1)">admin</text>
<text x="715.1" y="607.1" transform="rotate(-21 715.1 607.1)">admin</text>
<text x="1216.1" y="607.1" transform="rotate(-21 1216.1 607.1)">admin</text>
<text x="1717.1" y="607.1" transform="rotate(-21 1717.1 607.1)">admin</text>
<text x="2218.1" y="607.1" transform="rotate(-21 2218.1 607.1)">admin</text>
<text x="-36.4" y="725.6" transform="rotate(-21 -36.4 725.6)">admin</text>
<text x="464.6" y="725.6" transform="rotate(-21 464.6 725.6)">admin</text>
<text x="965.6" y="725.6" transform="rotate(-21 965.6 725.6)">admin</text>
<text x="1466.6" y="725.6" transform="rotate(-21 1466.6 725.6)">admin</text>
<text x="1967.6" y="725.6" transform="rotate(-21 1967.6 725.6)">admin</text>
<text x="2468.6" y="725.6" transform="rotate(-21 2468.6 725.6)">admin</text>
<text x="214.1" y="844.1" transform="rotate(-21 214.1 844.1)">admin</text>
<text x="715.1" y="844.1" transform="rotate(-21 715.1 844.1)">admin</text>
<text x="1216.1" y="844.1" transform="rotate(-21 1216.1 844.1)">admin</text>
<text x="1717.1" y="844.1" transform="rotate(-21 1717.1 844.1)">admin</text>
<text x="2218.1" y="844.1" transform="rotate(-21 2218.1 844.1)">admin</text>
<text x="-36.4" y="962.6" transform="rotate(-21 -36.4 962.6)">admin</text>
<text x="464.6" y="962.6" transform="rotate(-21 464.6 962.6)">admin</text>
<text x="965.6" y="962.6" transform="rotate(-21 965.6 962.6)">admin</text>
<text x="1466.6" y="962.6" transform="rotate(-21 1466.6 962.6)">admin</text>
<text x="1967.6" y="962.6" transform="rotate(-21 1967.6 962.6)">admin</text>
<text x="2468.6" y="962.6" transform="rotate(-21 2468.6 962.6)">admin</text>
<text x="214.1" y="1081.2" transform="rotate(-21 214.1 1081.2)">admin</text>
<text x="715.1" y="1081.2" transform="rotate(-21 715.1 1081.2)">admin</text>
<text x="1216.1" y="1081.2" transform="rotate(-21 1216.1 1081.2)">admin</text>
<text x="1717.1" y="1081.2" transform="rotate(-21 1717.1 1081.2)">admin</text>
<text x="2218.1" y="1081.2" transform="rotate(-21 2218.1 1081.2)">admin</text>
<text x="-36.4" y="1199.7" transform="rotate(-21 -36.4 1199.7)">admin</text>
<text x="464.6" y="1199.7" transform="rotate(-21 464.6 1199.7)">admin</text>
<text x="965.6" y="1199.7" transform="rotate(-21 965.6 1199.7)">admin</text>
<text x="1466.6" y="1199.7" transform="rotate(-21 1466.6 1199.7)">admin</text>
<text x="1967.6" y="1199.7" transform="rotate(-21 1967.6 1199.7)">admin</text>
<text x="2468.6" y="1199.7" transform="rotate(-21 2468.6 1199.7)">admin</text>
<text x="214.1" y="1318.2" transform="rotate(-21 214.1 1318.2)">admin</text>
<text x="715.1" y="1318.2" transform="rotate(-21 715.1 1318.2)">admin</text>
<text x="1216.1" y="1318.2" transform="rotate(-21 1216.1 1318.2)">admin</text>
<text x="1717.1" y="1318.2" transform="rotate(-21 1717.1 1318.2)">admin</text>
<text x="2218.1" y="1318.2" transform="rotate(-21 2218.1 1318.2)">admin</text></g>
</svg>
</body></html>
